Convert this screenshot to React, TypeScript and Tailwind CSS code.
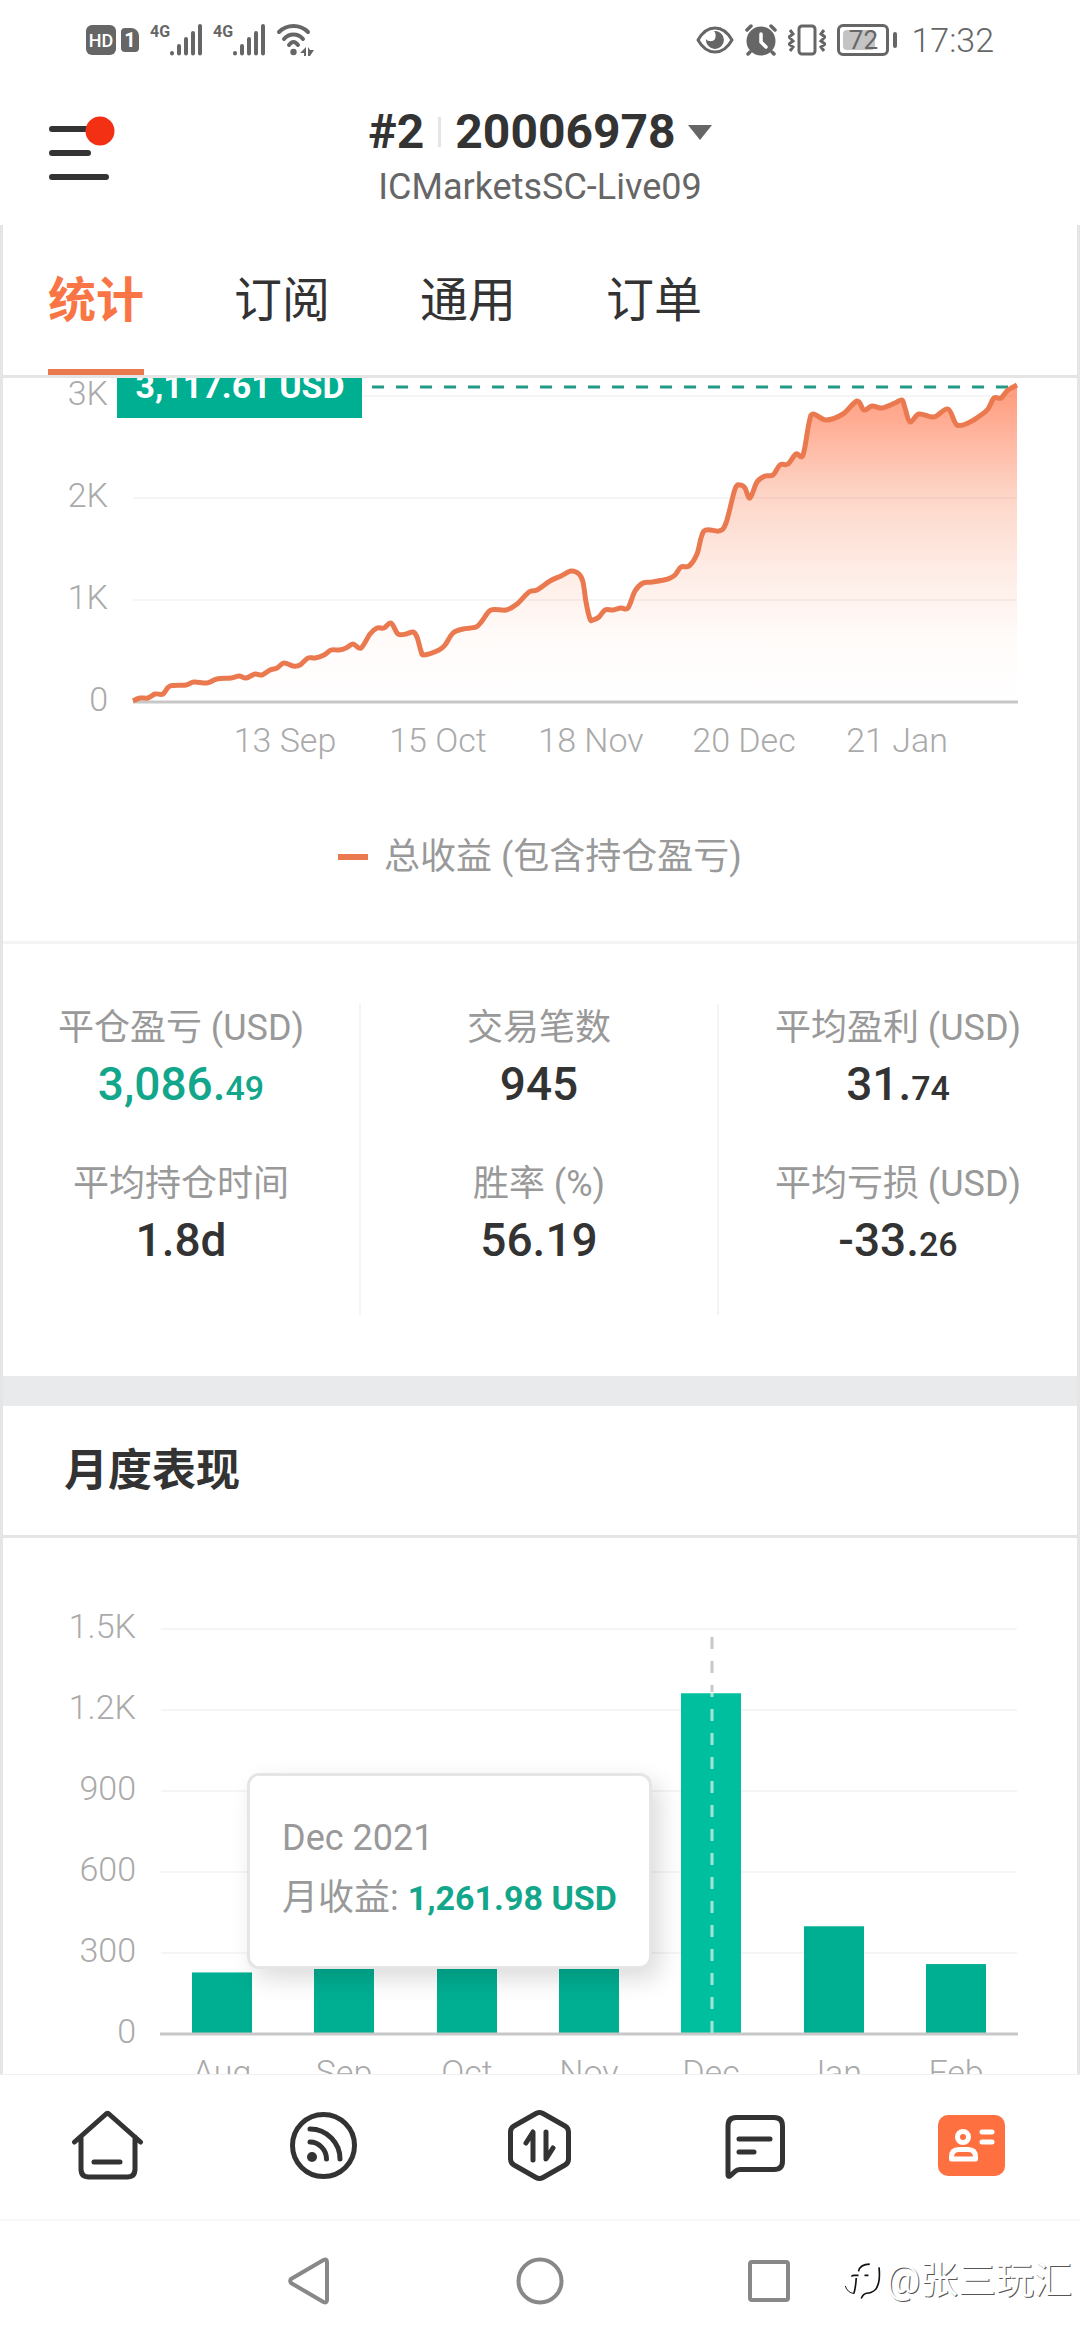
import { FC, ReactNode } from "react";
import cx from "clsx";

type Point = [number, number];

interface Stat {
  label: string;
  value: string;
  decimals?: string;
  positive?: boolean;
}

const TABS = ["统计", "订阅", "通用", "订单"];

const STAT_COLUMNS: Stat[][] = [
  [
    { label: "平仓盈亏 (USD)", value: "3,086.", decimals: "49", positive: true },
    { label: "平均持仓时间", value: "1.8d" },
  ],
  [
    { label: "交易笔数", value: "945" },
    { label: "胜率 (%)", value: "56.19" },
  ],
  [
    { label: "平均盈利 (USD)", value: "31.", decimals: "74" },
    { label: "平均亏损 (USD)", value: "-33.", decimals: "26" },
  ],
];

const PROFIT_DATES = ["13 Sep", "15 Oct", "18 Nov", "20 Dec", "21 Jan"];

const PROFIT_POINTS: Point[] = [
  [133, 323], [140, 320], [148, 320], [155, 316], [163, 316], [170, 308],
  [186, 307], [194, 304], [207, 305], [217, 301], [231, 300], [239, 298],
  [246, 300], [255, 296], [262, 297], [270, 292], [277, 290], [284, 285],
  [293, 288], [300, 287], [308, 280], [315, 280], [324, 277], [331, 272],
  [339, 272], [346, 270], [353, 266], [361, 270], [370, 256], [377, 250],
  [384, 250], [391, 245], [398, 256], [406, 256], [413, 254], [417, 259],
  [421, 273], [424, 277], [439, 272], [445, 267], [453, 255], [463, 251],
  [476, 249], [482, 243], [491, 232], [506, 232], [517, 226], [529, 214],
  [537, 212], [550, 203], [561, 198], [571, 193], [579, 196], [583, 204],
  [586, 224], [590, 241], [593, 242], [599, 239], [605, 232], [613, 232],
  [621, 230], [628, 230], [635, 213], [643, 205], [652, 204], [668, 201],
  [675, 197], [681, 189], [689, 188], [697, 176], [704, 153], [719, 153],
  [726, 145], [735, 111], [740, 107], [745, 110], [750, 120], [757, 104],
  [765, 98], [773, 97], [780, 87], [788, 86], [796, 76], [803, 77],
  [809, 45], [813, 36], [826, 42], [843, 36], [857, 23], [864, 32],
  [872, 28], [882, 30], [895, 25], [902, 22], [905, 30], [910, 44],
  [919, 36], [934, 39], [948, 31], [957, 47], [970, 44], [981, 37],
  [988, 31], [994, 20], [1001, 20], [1008, 12], [1017, 7],
];

const MONTHS = [
  { name: "Aug", value: 228 },
  { name: "Sep", value: 262 },
  { name: "Oct", value: 280 },
  { name: "Nov", value: 270 },
  { name: "Dec", value: 1261.98, active: true },
  { name: "Jan", value: 399 },
  { name: "Feb", value: 259 },
];

// smooth line through all points (Catmull-Rom as cubic beziers)
function smoothPath(points: Point[]) {
  let d = `M${points[0][0]} ${points[0][1]}`;
  for (let i = 0; i < points.length - 1; i++) {
    const p0 = points[i - 1] ?? points[i];
    const p1 = points[i];
    const p2 = points[i + 1];
    const p3 = points[i + 2] ?? p2;
    const c1 = [p1[0] + (p2[0] - p0[0]) / 6, p1[1] + (p2[1] - p0[1]) / 6];
    const c2 = [p2[0] - (p3[0] - p1[0]) / 6, p2[1] - (p3[1] - p1[1]) / 6];
    d += `C${c1.join(" ")} ${c2.join(" ")} ${p2.join(" ")}`;
  }
  return d;
}

const App = () => {
  return (
    <div
      lang="zh-CN"
      className="flex h-screen flex-col overflow-hidden bg-white font-['Roboto','Noto_Sans_CJK_SC',sans-serif] text-[#333]"
    >
      <StatusBar />
      <Header />
      <main className="min-h-0 flex-1 overflow-hidden border-x-[3px] border-[#e5e5e5]">
        <Tabs />
        <ProfitChart />
        <Stats />
        <div className="h-[30px] bg-[#e9eaec]" />
        <h2 className="flex h-[132px] items-center border-b-[3px] border-[#e5e5e5] px-[61px] text-[44px] font-bold">
          月度表现
        </h2>
        <MonthlyChart />
      </main>
      <BottomNav />
      <SystemNav />
    </div>
  );
};

const StatusBar = () => (
  <div className="flex h-20 shrink-0 items-center justify-between pl-[86px] pr-[86px] text-[#666]">
    <div className="flex items-center gap-[11px]">
      <div className="flex items-center gap-[5px]">
        <span className="flex h-[30px] w-[30px] items-center justify-center rounded-md bg-[#666] text-[18px] font-medium text-white">
          HD
        </span>
        <span className="flex h-6 w-[18px] items-center justify-center rounded-sm rounded-tr-lg bg-[#666] text-[20px] font-bold text-white">
          1
        </span>
      </div>
      <Signal />
      <Signal />
      <svg width="38" height="32" viewBox="0 0 38 32" fill="none" stroke="currentColor" strokeWidth="4" strokeLinecap="round">
        <path d="M3 8C11 0 24 0 32 8M8 15C13 9 22 9 27 15M13 21c3-4 6-4 9 0" />
        <circle cx="17.5" cy="28" r="3.2" fill="currentColor" stroke="none" />
        <path d="M30 23v9h-2v-3h-4zM32 23v9h2l4-6h-4z" fill="currentColor" stroke="none" />
      </svg>
    </div>
    <div className="flex items-center gap-[11px]">
      <svg width="38" height="28" viewBox="0 0 38 28" fill="none" stroke="currentColor" strokeWidth="3">
        <path d="M2 14C11-2 27-2 36 14C27 30 11 30 2 14Z" strokeLinejoin="round" />
        <path d="M18 5a9 9 0 1 1-8 8c2 3 7 3 9 0c1-3 1-6-1-8z" fill="currentColor" stroke="none" />
      </svg>
      <svg width="32" height="32" viewBox="0 0 32 32" fill="none" stroke="currentColor" strokeWidth="3.5" strokeLinecap="round">
        <circle cx="16" cy="17" r="14.5" fill="currentColor" stroke="none" />
        <path d="M2 6l4-4M30 6l-4-4M5 28l-2 2M27 28l2 2" />
        <path d="M16 10v8l5 5" stroke="#fff" />
      </svg>
      <svg width="38" height="32" viewBox="0 0 38 32" fill="none" stroke="currentColor" strokeWidth="3">
        <rect x="11" y="2" width="16" height="28" rx="3" />
        <path d="M2 6l3 4l-4 3l4 4l-4 3l4 3l-3 4M36 6l-3 4l4 3l-4 4l4 3l-4 3l3 4" />
      </svg>
      <div className="flex items-center gap-1">
        <div className="relative flex h-8 w-[52px] items-center justify-center rounded-md border-[3px] border-[#666]">
          <span className="absolute inset-y-[3px] left-[3px] w-8 rounded-sm bg-[#c4c4c4]" />
          <span className="relative text-[26px]">72</span>
        </div>
        <span className="h-4 w-1 rounded-full bg-[#666]" />
      </div>
      <span className="pl-[3px] text-[34px] font-light">17:32</span>
    </div>
  </div>
);

const Signal = () => (
  <div className="flex items-end">
    <span className="self-start text-[16px] leading-4 font-bold">4G</span>
    <svg width="32" height="32" viewBox="0 0 32 32" stroke="currentColor" strokeWidth="4" strokeLinecap="round">
      <path d="M2 29v0.5M9 22v7.5M16 15v14.5M23 9v20.5M30 2v27.5" />
    </svg>
  </div>
);

const Header = () => (
  <header className="grid h-[145px] shrink-0 grid-cols-[1fr_auto_1fr] items-start">
    <button type="button" aria-label="菜单" className="mt-9 ml-[49px] w-[66px]">
      <svg width="66" height="68" viewBox="0 0 66 68" fill="none" stroke="#333" strokeWidth="6" strokeLinecap="round">
        <path d="M3 13h38M3 37h36M3 61h54" />
        <circle cx="51" cy="15" r="14.5" fill="#f32f14" stroke="none" />
      </svg>
    </button>
    <div className="flex flex-col items-center pt-[22px]">
      <button type="button" className="flex h-[60px] items-center text-[48px] font-bold">
        <span>#2</span>
        <span className="mx-[14px] h-[30px] w-[3px] bg-[#e5e5e5]" />
        <span>20006978</span>
        <svg width="24" height="15" viewBox="0 0 24 15" className="ml-3" fill="#666">
          <path d="M0 0h24L12 15z" />
        </svg>
      </button>
      <p className="text-[36px] leading-[50px] text-[#666]">ICMarketsSC-Live09</p>
    </div>
  </header>
);

const Tabs = () => (
  <nav className="flex h-[153px] gap-[90px] border-b-[3px] border-[#e5e5e5] pl-[45px]">
    {TABS.map((tab, i) => (
      <button
        key={tab}
        type="button"
        className={cx(
          "border-b-[6px] pt-2 text-[48px]",
          i === 0 ? "border-[#eb7950] font-bold text-[#f97545]" : "border-transparent",
        )}
      >
        {tab}
      </button>
    ))}
  </nav>
);

const ProfitChart = () => {
  const line = smoothPath(PROFIT_POINTS);

  return (
    <section className="border-b-[3px] border-[#f4f4f4]">
      <svg viewBox="3 0 1074 400" className="block w-full text-[34px]">
        <defs>
          <linearGradient id="profit" x1="0" y1="7" x2="0" y2="324" gradientUnits="userSpaceOnUse">
            <stop offset="0" stopColor="#ff6e42" stopOpacity=".7" />
            <stop offset=".17" stopColor="#ff6e42" stopOpacity=".5" />
            <stop offset=".35" stopColor="#f97545" stopOpacity=".3" />
            <stop offset=".56" stopColor="#f97545" stopOpacity=".15" />
            <stop offset=".8" stopColor="#f97545" stopOpacity=".03" />
            <stop offset="1" stopColor="#f97545" stopOpacity="0" />
          </linearGradient>
        </defs>
        {[3, 2, 1, 0].map((k) => (
          <g key={k}>
            {k > 0 && <path d={`M133 ${324 - k * 102}H1017`} stroke="#f5f5f5" strokeWidth="2" />}
            <text x="108" y={333 - k * 102} textAnchor="end" fill="#aaa" className="font-light">
              {k > 0 ? `${k}K` : "0"}
            </text>
          </g>
        ))}
        <path d={`${line}V324H133Z`} fill="url(#profit)" />
        <path d="M133 324H1018" stroke="#c8c8c8" strokeWidth="3" />
        <path d="M372 9H1010" stroke="#229a86" strokeWidth="3" strokeDasharray="12 12" />
        <path d={line} fill="none" stroke="#eb7950" strokeWidth="5" strokeLinejoin="round" />
        <rect x="117" y="-22" width="245" height="62" fill="#00ae92" />
        <text x="240" y="20" textAnchor="middle" fill="#fff" className="font-bold">
          3,117.61 USD
        </text>
        {PROFIT_DATES.map((date, i) => (
          <text key={date} x={285 + i * 153} y="374" textAnchor="middle" fill="#aaa" className="font-light">
            {date}
          </text>
        ))}
      </svg>
      <p className="flex items-center justify-center gap-4 pt-[52px] pb-[57px] text-[36px] leading-[54px] text-[#999]">
        <span className="h-[6px] w-[30px] bg-[#eb7950]" />
        总收益 (包含持仓盈亏)
      </p>
    </section>
  );
};

const Stats = () => (
  <section className="grid grid-cols-3 divide-x-2 divide-[#f4f4f4] pt-[60px] pb-[61px]">
    {STAT_COLUMNS.map((column, i) => (
      <dl key={i} className="flex flex-col gap-11 pb-[43px] text-center">
        {column.map((stat) => (
          <div key={stat.label}>
            <dt className="h-12 text-[36px] leading-[48px] text-[#999]">{stat.label}</dt>
            <dd
              className={cx(
                "h-16 text-[46px] leading-[64px] font-medium",
                stat.positive && "text-[#12a68a]",
              )}
            >
              {stat.value}
              {stat.decimals && <span className="text-[34px] leading-none">{stat.decimals}</span>}
            </dd>
          </div>
        ))}
      </dl>
    ))}
  </section>
);

const MonthlyChart = () => {
  const baseline = 496;
  const perUnit = 81 / 300;

  return (
    <section className="relative">
      <svg viewBox="3 0 1074 560" className="block w-full text-[34px]">
        {[1500, 1200, 900, 600, 300, 0].map((v) => (
          <g key={v}>
            {v > 0 && <path d={`M161 ${baseline - v * perUnit}H1017`} stroke="#f5f5f5" strokeWidth="2" />}
            <text x="136" y={baseline + 9 - v * perUnit} textAnchor="end" fill="#aaa" className="font-light">
              {v > 1000 ? `${v / 1000}K` : v}
            </text>
          </g>
        ))}
        {MONTHS.map((month, i) => (
          <g key={month.name}>
            <rect
              x={192 + Math.round(i * 122.3)}
              y={baseline - month.value * perUnit}
              width="60"
              height={month.value * perUnit}
              fill={month.active ? "#00bf9f" : "#00ae92"}
            />
            <text x={222 + Math.round(i * 122.3)} y="546" textAnchor="middle" fill="#aaa" className="font-light">
              {month.name}
            </text>
          </g>
        ))}
        <path d="M160 496H1018" stroke="#c8c8c8" strokeWidth="3" />
        <path d="M712 99V154" stroke="#c8c8c8" strokeWidth="3" strokeDasharray="12 12" />
        <path d="M712 155V496" stroke="#a5e3d6" strokeWidth="3" strokeDasharray="12 12" strokeDashoffset="8" />
      </svg>
      <div className="absolute top-[235px] left-[244px] rounded-xl border-[3px] border-[#e5e5e5] bg-white px-8 pt-8 pb-[38px] text-[36px] leading-[60px] whitespace-nowrap text-[#999] shadow-[8px_10px_24px_rgba(0,0,0,0.14)]">
        <p className="h-[60px]">Dec 2021</p>
        <p className="h-[60px]">
          月收益: <b className="text-[34px] leading-none text-[#12a68a]">1,261.98 USD</b>
        </p>
      </div>
    </section>
  );
};

const NavItem: FC<{ label: string; children: ReactNode }> = ({ label, children }) => (
  <a href="#" aria-label={label} className="flex flex-1 items-center justify-center">
    <svg
      width="74"
      height="74"
      viewBox="0 0 74 74"
      fill="none"
      stroke="#333"
      strokeWidth="5"
      strokeLinecap="round"
      strokeLinejoin="round"
    >
      {children}
    </svg>
  </a>
);

const BottomNav = () => (
  <nav className="flex h-[145px] shrink-0 border-t border-[#f0f0f0]">
    <NavItem label="首页">
      <path d="M3.5 32L34.5 4.5Q36.5 2.500 38.5 4.5L69.500 32M10 27V59Q10 67 18 67H56Q64 67 64 59V27M23 52H49" />
    </NavItem>
    <NavItem label="动态">
      <circle cx="36.500" cy="35.500" r="31" />
      <path d="M23 19C40 19 53 33 53 49M23 32C32 32 39.500 40 39.500 49" />
      <circle cx="25" cy="47" r="5" fill="#333" stroke="none" />
    </NavItem>
    <NavItem label="交易">
      <path d="M33 3.500Q36.500 1.500 40 3.500L62 16Q65.500 18 65.500 22V49Q65.500 53 62 55L40 67.500Q36.500 69.500 33 67.500L11 55Q7.500 53 7.500 49V22Q7.500 18 11 16Z" />
      <path d="M23 33L30 22V50M43 22V49L50 38" />
    </NavItem>
    <NavItem label="消息">
      <path d="M9 65V16Q9 7.500 17 7.500H55Q63.500 7.500 63.500 16V51Q63.500 59.500 55 59.500H21Q18 59.500 16 61.500L11 66Q9 67 9 65ZM20 29H51M20 42H35" />
    </NavItem>
    <NavItem label="账户">
      <rect x="3" y="5" width="67" height="61" rx="10" fill="#ff7040" stroke="none" />
      <g stroke="#fff">
        <circle cx="28" cy="27" r="5.500" />
        <path d="M16.500 49V47Q16.500 39.500 24 39.500H33Q40.500 39.500 40.500 47V49ZM47 22H57M47 32H57" />
      </g>
    </NavItem>
  </nav>
);

const SystemNav = () => (
  <footer className="relative flex h-[121px] shrink-0 items-center justify-center gap-[181px] border-t-2 border-[#f8f8f8]">
    <button type="button" aria-label="返回">
      <svg width="48" height="48" viewBox="0 0 48 48" fill="none" stroke="#888" strokeWidth="4" strokeLinejoin="round">
        <path d="M36.500 3Q40 1.500 40 5V43Q40 46.500 36.500 45L4 26Q2.500 24 4 22Z" />
      </svg>
    </button>
    <button type="button" aria-label="主屏幕">
      <svg width="48" height="48" viewBox="0 0 48 48" fill="none" stroke="#888" strokeWidth="4">
        <circle cx="24" cy="24" r="21.500" />
      </svg>
    </button>
    <button type="button" aria-label="最近任务">
      <svg width="48" height="48" viewBox="0 0 48 48" fill="none" stroke="#888" strokeWidth="4">
        <rect x="5" y="5" width="38" height="38" rx="2" />
      </svg>
    </button>
    <div className="absolute right-2 flex items-center gap-[5px]">
      <svg width="37" height="38" viewBox="30 78 112 114" fill="none" stroke="#111" strokeWidth="5">
        <path d="M74 106Q78 84 108 84M53 122Q54 117 62 118H74M67 126Q66 150 60 173M92 118H104M136 94Q141 140 126 160Q114 172 98 172Q88 174 82 188" />
        <path d="M60 173Q40 170 34 150" strokeWidth="3" />
      </svg>
      <span className="text-[38px] text-white [text-shadow:1px_1px_0_#555]">@张三玩汇</span>
    </div>
  </footer>
);

export default App;
